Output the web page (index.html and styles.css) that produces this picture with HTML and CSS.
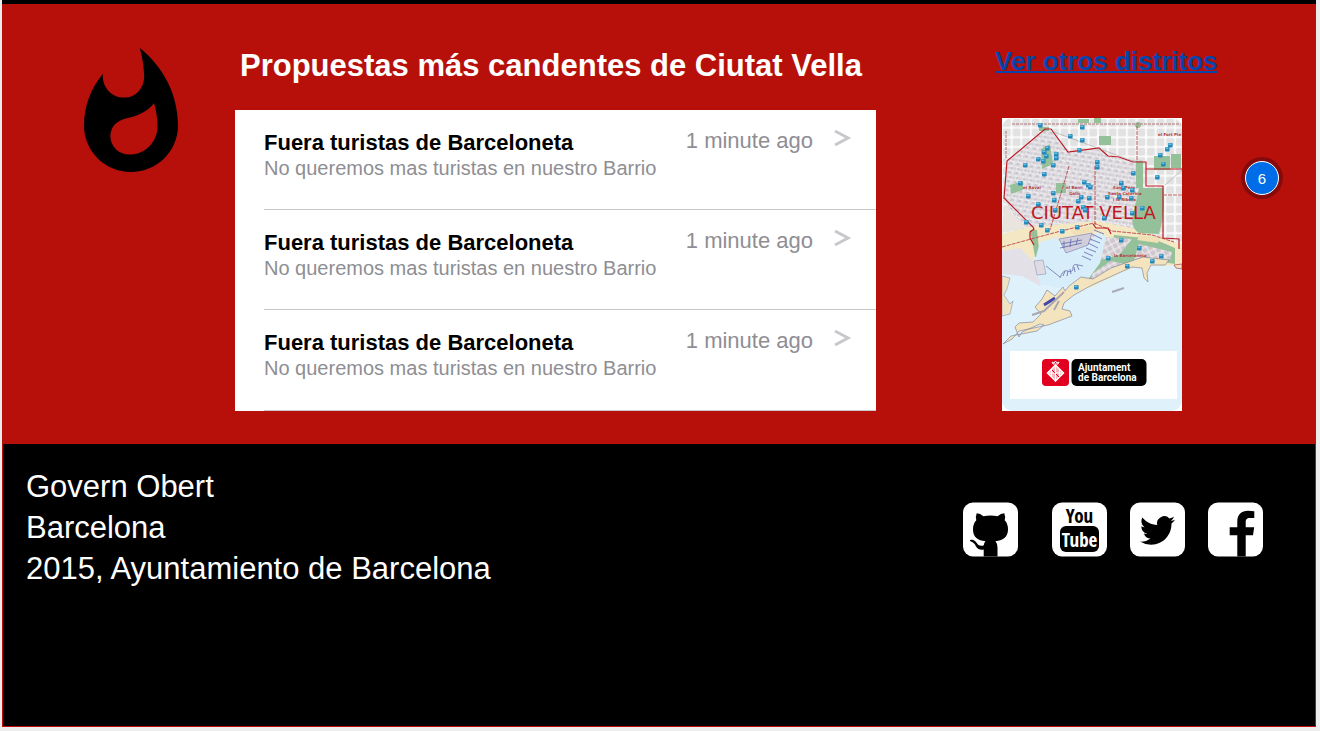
FILE: index.html
```
<!DOCTYPE html>
<html lang="es">
<head>
<meta charset="utf-8">
<meta name="viewport" content="width=device-width, initial-scale=1">
<title>Ciutat Vella</title>
<link rel="stylesheet" href="styles.css">
</head>
<body>
<div class="page">
<main class="hot">
  <div class="flame">
    <svg class="flame-icon" viewBox="4 .67 16 21.33" preserveAspectRatio="none" aria-hidden="true"><path d="M13.5.67s.74 2.65.74 4.8c0 2.06-1.35 3.73-3.41 3.73-2.07 0-3.63-1.67-3.63-3.73l.03-.36C5.21 7.51 4 10.62 4 14c0 4.42 3.58 8 8 8s8-3.58 8-8C20 8.61 17.41 3.8 13.5.67zM11.71 19c-1.78 0-3.22-1.4-3.22-3.14 0-1.62 1.05-2.76 2.81-3.12 1.77-.36 3.6-1.21 4.62-2.58.39 1.29.59 2.65.59 4.04 0 2.65-2.15 4.8-4.8 4.8z"/></svg>
  </div>
  <section class="proposals">
    <h1 class="heading">Propuestas más candentes de Ciutat Vella</h1>
    <ul class="list">
      <li class="item"><a class="row" href="#p1">
        <span class="copy"><strong class="title">Fuera turistas de Barceloneta</strong><span class="desc">No queremos mas turistas en nuestro Barrio</span></span>
        <span class="time">1 minute ago</span>
        <svg class="chevron" viewBox="0 0 16 18" aria-hidden="true"><path d="M1 1l13 7-13 7"/></svg>
      </a></li>
      <li class="item"><a class="row" href="#p2">
        <span class="copy"><strong class="title">Fuera turistas de Barceloneta</strong><span class="desc">No queremos mas turistas en nuestro Barrio</span></span>
        <span class="time">1 minute ago</span>
        <svg class="chevron" viewBox="0 0 16 18" aria-hidden="true"><path d="M1 1l13 7-13 7"/></svg>
      </a></li>
      <li class="item"><a class="row" href="#p3">
        <span class="copy"><strong class="title">Fuera turistas de Barceloneta</strong><span class="desc">No queremos mas turistas en nuestro Barrio</span></span>
        <span class="time">1 minute ago</span>
        <svg class="chevron" viewBox="0 0 16 18" aria-hidden="true"><path d="M1 1l13 7-13 7"/></svg>
      </a></li>
    </ul>
  </section>
  <aside class="district">
    <a class="other" href="#distritos">Ver otros distritos</a>
    <div class="map-row">
      <svg class="map" viewBox="0 0 180 293" role="img" aria-label="Mapa de Ciutat Vella">
        <defs>
          <pattern id="blocks" width="9.6" height="9.6" patternUnits="userSpaceOnUse"><rect width="9.6" height="9.6" fill="#fafafa"/><rect x="1" y="1" width="7.8" height="7.8" rx="1.5" fill="#e2e2e2"/></pattern>
          <pattern id="lanes" width="7" height="9" patternUnits="userSpaceOnUse" patternTransform="rotate(9)"><rect width="7" height="9" fill="#d6d2d8"/><path d="M0 1h7M2 0v5M5 4v5M0 5l7 1" stroke="#f4f4f4" stroke-width=".9"/><path d="M3 2v2M1 7h2" stroke="#b3a8bb" stroke-width=".8"/></pattern>
          <pattern id="lanes2" width="6" height="6" patternUnits="userSpaceOnUse" patternTransform="rotate(-28)"><rect width="6" height="6" fill="#cdc6cd"/><path d="M0 1h6M1 0v6" stroke="#f6f2f2"/></pattern>
          <g id="pin"><rect x="-2" y="-2" width="4.6" height="4.6" rx=".8" fill="#2688ba"/><path d="M-1.6-1.6h3v1.7h-3z" fill="#65bfe0"/></g>
          <clipPath id="frame"><rect width="180" height="293" rx="11"/></clipPath>
        </defs>
        <rect width="180" height="293" fill="#fff"/>
        <g clip-path="url(#frame)">
        <rect width="180" height="293" fill="#dff1fb"/>
        <path d="M0 0h180v134l-34-8-46-14-72 12-28 6z" fill="url(#blocks)"/>
        <path d="M4 43L43 11l6 1 17 22 31-4 9 8 19 4h16v28l17 4v48l-39-4-25 7-72-10L2 80z" fill="url(#lanes)"/>
        <path d="M2 87l22 22-24 6z" fill="#e9e4dd"/>
        <path d="M0 116l27-7 68-6 40 8 45 15v21l-25 1-13-3-24 10-30 15-8-5 20-30-7-18-22 3-35 8-4 12 8 25-14-4-14-14-12-17z" fill="#f4e7c4"/>
        <path d="M0 133l18-3 12 12 14 18-6 8-18-10-20-2z" fill="#e3e0e8"/>
        <g fill="#94c19a">
          <path d="M137 70h24q3 24-4 46l-20-1q-9-6-6-18zM134 43h7v27h-7zM152 38h16v14h-16zM169 36h10v14h-10zM97 18h12v9H97zM39 31l9-5 3 20-11 5zM8 67l13-4v9l-12 4zM28 112h7l1 10 2 17h-5l-3-17zM112 117l40 4 21 9v16l-31-5-22 5-26 15-6 5-2-5 13-22 10-6z"/>
          <circle cx="136" cy="7" r="3"/><path d="M37 9h10v4H37zM76 1h11v4H76zM92 0h7v5h-7zM54 65h10v10H54z"/>
        </g>
        <g fill="url(#lanes2)"><path d="M104 119l26 2-13 16-19 5zM137 126l33 8-2 8-27-3-9 3zM91 155l18-12 13 3-15 11-20 9z"/></g>
        <path d="M138 117l20 3-2 5-21-3zM68 113l22-5 7 4-24 5z" fill="#f1dfb5"/>
        <path d="M38 124l18-5 2 13 29-5 8-13 9 4-6 27-14 19-28 6-18-4-6-20z" fill="#d7edf9"/>
        <path d="M57 121l33-6-4 12-22 8z" fill="#d2cfdc" stroke="#7478b2" stroke-width=".6"/>
        <path d="M58 130l22-5M59 126l21-4M62 123v7M69 121l-1 8M76 120l-2 7M92 112l10 4M90 116l10 5M88 121l10 4M86 125l10 5M84 130l10 4M82 134l9 4M80 138l9 4" fill="none" stroke="#6267ae" stroke-width=".8"/>
        <path d="M32 143l9-1 3 14-9 1z" fill="#dedbe2" stroke="#8389b0" stroke-width=".5"/>
        <path d="M44 148l14 11M58 160q3-9 8-7t5-3 5-3l5 1" fill="none" stroke="#7782b2" stroke-width=".9"/>
        <path d="M61 158l2-5M65 158l1-5M69 156l-1-5M73 154l-1-5M77 152l-2-5" stroke="#6267ae" stroke-width=".8"/>
        <path d="M0 158l8 2-3 11-3 6 6 9 3-3-3 13-8 2z" fill="#f0e3c1" stroke="#7d84ad" stroke-width=".5"/>
        <path d="M1 226l9-5 7-8 29-6 24-9-2-5-8-2 2-6 10-8 18-10 40-18 10 1 2 10 4 4-1-9 4-8 14 0 4-5-26-3-32 11-18 11-12-2-12 9-4 5-2-4-8 9-8-6-5 9-7 8 6 7-8 8-14 1-4 4 4 10 3-5 18-8 4 1-7 6-26 5-6 6z" fill="#f4e4bd" stroke="#777993" stroke-width=".6"/>
        <path d="M42 187l11-7" stroke="#4146ac" stroke-width="3"/>
        <path d="M30 197l12-4 20-19M57 183l-5 9" stroke="#a9a7b0" stroke-width="2" fill="none"/>
        <path d="M110 174l12-4" stroke="#aaa9bd" stroke-width="2"/>
        <path d="M172 147l8-1v5l-6-1z" fill="#f4e4bd" stroke="#a04d58" stroke-width=".7"/>
        <path d="M67 48l-7 24-12 40M93 48v60M135 8v36M180 77h-18M0 129l29-8 30-8 33-8 18 8 40 4 22 7" fill="none" stroke="#b64b4b" stroke-width=".9" stroke-dasharray="4 1"/>
        <path d="M32 127l-4-7v-6l4-3-1-2-29-29L5 43 43 11h6l17 23 31-4 9 8 11 1 14 5h13v24h17v52l16 1v10M91 106l3 4h12l3 6M144 51h36" fill="none" stroke="#bd1a23" stroke-width="1.2"/>
        <path d="M10 6h170M4 13v28" stroke="#ad7777" stroke-width="1" stroke-dasharray="3 1"/>
        <path d="M52 14l84 31M163 67l17-15" stroke="#999" stroke-width=".5"/>
        </g>
        <g class="map-labels"><text x="21" y="71">el Raval</text><text x="64" y="71">el Barri</text><text x="67" y="77">Gòtic</text><text x="111" y="71">Sant Pere</text><text x="106" y="77">Santa Caterina</text><text x="111" y="83">i la Ribera</text><text x="112" y="139">la Barceloneta</text><text x="156" y="18">el Fort Pie</text></g>
        <text class="map-title" x="29" y="101">CIUTAT VELLA</text>
        <use href="#pin" x="38" y="7"/><use href="#pin" x="80" y="9"/><use href="#pin" x="68" y="18"/><use href="#pin" x="80" y="22"/><use href="#pin" x="77" y="32"/><use href="#pin" x="45" y="30"/><use href="#pin" x="42" y="34"/><use href="#pin" x="44" y="38"/><use href="#pin" x="36" y="41"/><use href="#pin" x="41" y="43"/><use href="#pin" x="54" y="36"/><use href="#pin" x="54" y="40"/><use href="#pin" x="51" y="47"/><use href="#pin" x="23" y="47"/><use href="#pin" x="42" y="56"/><use href="#pin" x="18" y="65"/><use href="#pin" x="26" y="78"/><use href="#pin" x="51" y="75"/><use href="#pin" x="52" y="82"/><use href="#pin" x="36" y="86"/><use href="#pin" x="53" y="92"/><use href="#pin" x="95" y="44"/><use href="#pin" x="95" y="49"/><use href="#pin" x="82" y="64"/><use href="#pin" x="86" y="67"/><use href="#pin" x="88" y="69"/><use href="#pin" x="79" y="79"/><use href="#pin" x="76" y="83"/><use href="#pin" x="87" y="80"/><use href="#pin" x="81" y="89"/><use href="#pin" x="83" y="92"/><use href="#pin" x="105" y="79"/><use href="#pin" x="117" y="79"/><use href="#pin" x="119" y="65"/><use href="#pin" x="121" y="70"/><use href="#pin" x="130" y="72"/><use href="#pin" x="129" y="80"/><use href="#pin" x="140" y="90"/><use href="#pin" x="130" y="95"/><use href="#pin" x="131" y="55"/><use href="#pin" x="155" y="59"/><use href="#pin" x="161" y="46"/><use href="#pin" x="158" y="37"/><use href="#pin" x="165" y="31"/><use href="#pin" x="168" y="27"/><use href="#pin" x="24" y="104"/><use href="#pin" x="39" y="107"/><use href="#pin" x="45" y="112"/><use href="#pin" x="60" y="113"/><use href="#pin" x="75" y="109"/><use href="#pin" x="102" y="100"/><use href="#pin" x="119" y="122"/><use href="#pin" x="137" y="130"/><use href="#pin" x="159" y="138"/><use href="#pin" x="106" y="140"/><use href="#pin" x="150" y="143"/><use href="#pin" x="125" y="148"/><use href="#pin" x="74" y="169"/>
        <path d="M8 233h167v48H8z" fill="#fff"/>
        <rect x="40" y="241" width="27" height="27" rx="4" fill="#e1001f"/>
        <path d="M53.500 247l8 8-8 8-8-8z" fill="#f6b5bb" stroke="#fff" stroke-width="1.500"/><path d="M49.500 251v8M53.500 248v16M57.500 251v8M46 255h15M51 246l-1-2 2 1 1.500-2 1.500 2 2-1-1 2z" stroke="#fff" fill="none"/>
        <path d="M50 252l3 3M54 256l3 3" stroke="#e1001f"/>
        <rect x="69.500" y="241" width="75" height="27" rx="5"/>
        <text class="brand" x="76" y="253">Ajuntament</text><text class="brand" x="76" y="263">de Barcelona</text>
      </svg>
      <span class="badge">6</span>
    </div>
  </aside>
</main>
<footer class="footer">
  <p class="legal">Govern Obert<br>Barcelona<br>2015, Ayuntamiento de Barcelona</p>
  <nav class="social" aria-label="Redes sociales">
    <a class="net net-github" href="#github" aria-label="GitHub"><svg class="net-icon" viewBox="0 0 55 54"><rect width="55" height="54" rx="10" fill="#fff"/><path d="M13.700 10.700Q17 10.800 20.500 13.800Q27.500 12.300 34.500 13.800Q38 10.800 41.300 10.700Q42.700 14 41.700 17.700Q45 21 45 27C45 35 39.500 38 32.500 38.700Q34.500 41 34.500 45V54H20.700V47C15 48 13.500 45 12 42Q10.500 39.500 7 38.500Q6.500 37 9 37.300C13 38 13.500 41 15.500 42.500Q18 43.800 20.800 42.700Q21 40 22.500 38.700C15 38 10 35 10 27Q10 21 13.300 17.700Q12.300 14 13.700 10.700z"/></svg></a>
    <a class="net" href="#youtube" aria-label="YouTube"><svg class="net-icon" viewBox="0 0 55 54"><rect width="55" height="54" rx="10" fill="#fff"/><rect x="8" y="23.500" width="39" height="26" rx="6"/><text class="you" x="27.500" y="20">You</text><text class="tube" x="27.500" y="44">Tube</text></svg></a>
    <a class="net" href="#twitter" aria-label="Twitter"><svg class="net-icon" viewBox="0 0 55 54"><rect width="55" height="54" rx="10" fill="#fff"/><path transform="translate(10 10.500) scale(1.460)" d="M23.953 4.570a10 10 0 01-2.825.775 4.958 4.958 0 002.163-2.723c-.951.555-2.005.959-3.127 1.184a4.920 4.920 0 00-8.384 4.482C7.690 8.095 4.067 6.130 1.640 3.162a4.822 4.822 0 00-.666 2.475c0 1.710.870 3.213 2.188 4.096a4.904 4.904 0 01-2.228-.616v.060a4.923 4.923 0 003.946 4.827 4.996 4.996 0 01-2.212.085 4.936 4.936 0 004.604 3.417 9.867 9.867 0 01-6.102 2.105c-.390 0-.779-.023-1.170-.067a13.995 13.995 0 007.557 2.209c9.053 0 13.998-7.496 13.998-13.985 0-.210 0-.420-.015-.630A9.935 9.935 0 0024 4.590z"/></svg></a>
    <a class="net" href="#facebook" aria-label="Facebook"><svg class="net-icon" viewBox="0 0 55 54"><rect width="55" height="54" rx="10" fill="#fff"/><path d="M29.300 54V32.700H21.700V24.700H29.300V19C29.300 12 33.500 8.300 40 8.300Q44 8.300 46.300 8.700V15.500H42C38.500 15.500 37.700 17 37.700 20V24.700H46.200L45 32.700H37.700V54z"/></svg></a>
  </nav>
</footer>
</div>
</body>
</html>
```
FILE: styles.css
```
* { box-sizing: border-box; }
body { margin: 0; background: #ededed; font-family: "Liberation Sans", Arial, sans-serif; }
.page { display: flex; flex-direction: column; min-height: 100vh; padding: 0 4px 4px 2px; }
.hot { display: grid; grid-template-columns: 233px minmax(0, 1fr) 440px; border-top: 4px solid #000; background: #b7100a; padding-bottom: 33px; }
.flame { padding: 44px 0 0 82px; }
.flame-icon { display: block; width: 94px; height: 124px; }
.heading { margin: 0; padding: 44px 0 26px 5px; font-size: 31px; line-height: 36px; color: #fff; white-space: nowrap; }
.list { margin: 0; padding: 0; list-style: none; background: #fff; }
.item { padding-left: 29px; }
.row { display: flex; align-items: flex-start; min-height: 100px; padding: 20px 26px 0 0; border-bottom: 1px solid #c8c7cc; color: #8e8e93; text-decoration: none; }
.item:last-child .row { min-height: 101px; }
.copy { display: flex; flex: 1; flex-direction: column; }
.title { font-size: 22px; line-height: 26px; color: #000; }
.desc { font-size: 20px; line-height: 24px; }
.time { font-size: 22px; line-height: 22px; }
.chevron { width: 16px; height: 18px; margin-left: 21px; fill: none; stroke: #c7c7cc; stroke-width: 3; overflow: visible; }
.district { padding: 42px 0 0 119px; }
.other { display: block; font-size: 26px; line-height: 30px; font-weight: bold; color: #0645ad; text-decoration-thickness: 2px; white-space: nowrap; }
.map-row { display: flex; align-items: flex-start; gap: 63px; padding: 42px 0 0 7px; }
.map { flex: none; width: 180px; height: 293px; }
.map-title { font: 18px "DejaVu Sans", sans-serif; fill: #c01620; }
.map-labels { font: bold 4px "DejaVu Sans", sans-serif; fill: #b33c3c; }
.brand { font: bold 10px Roboto, sans-serif; fill: #fff; }
.badge { display: flex; align-items: center; justify-content: center; width: 34px; height: 34px; margin-top: 43px; border: 1px solid #fff; border-radius: 50%; background: #006de8; box-shadow: 0 0 0 4px #850b0b; color: #fff; font-size: 15px; }
.footer { display: flex; flex: 1; align-items: flex-start; justify-content: space-between; padding: 22px 52px 24px 23px; border: 1px solid #c00b0b; border-top: 0; background: #000; }
.legal { margin: 0; color: #fff; font-size: 31px; line-height: 41px; }
.social { display: flex; gap: 23px; padding-top: 36px; }
.net { display: block; }
.net-github { margin-right: 11px; }
.net-icon { display: block; width: 55px; height: 55px; }
.you, .tube { font: bold 19px "Liberation Sans Narrow", "Open Sans Condensed", "Roboto Condensed", "DejaVu Sans Condensed", sans-serif; text-anchor: middle; }
.tube { fill: #fff; }
```
